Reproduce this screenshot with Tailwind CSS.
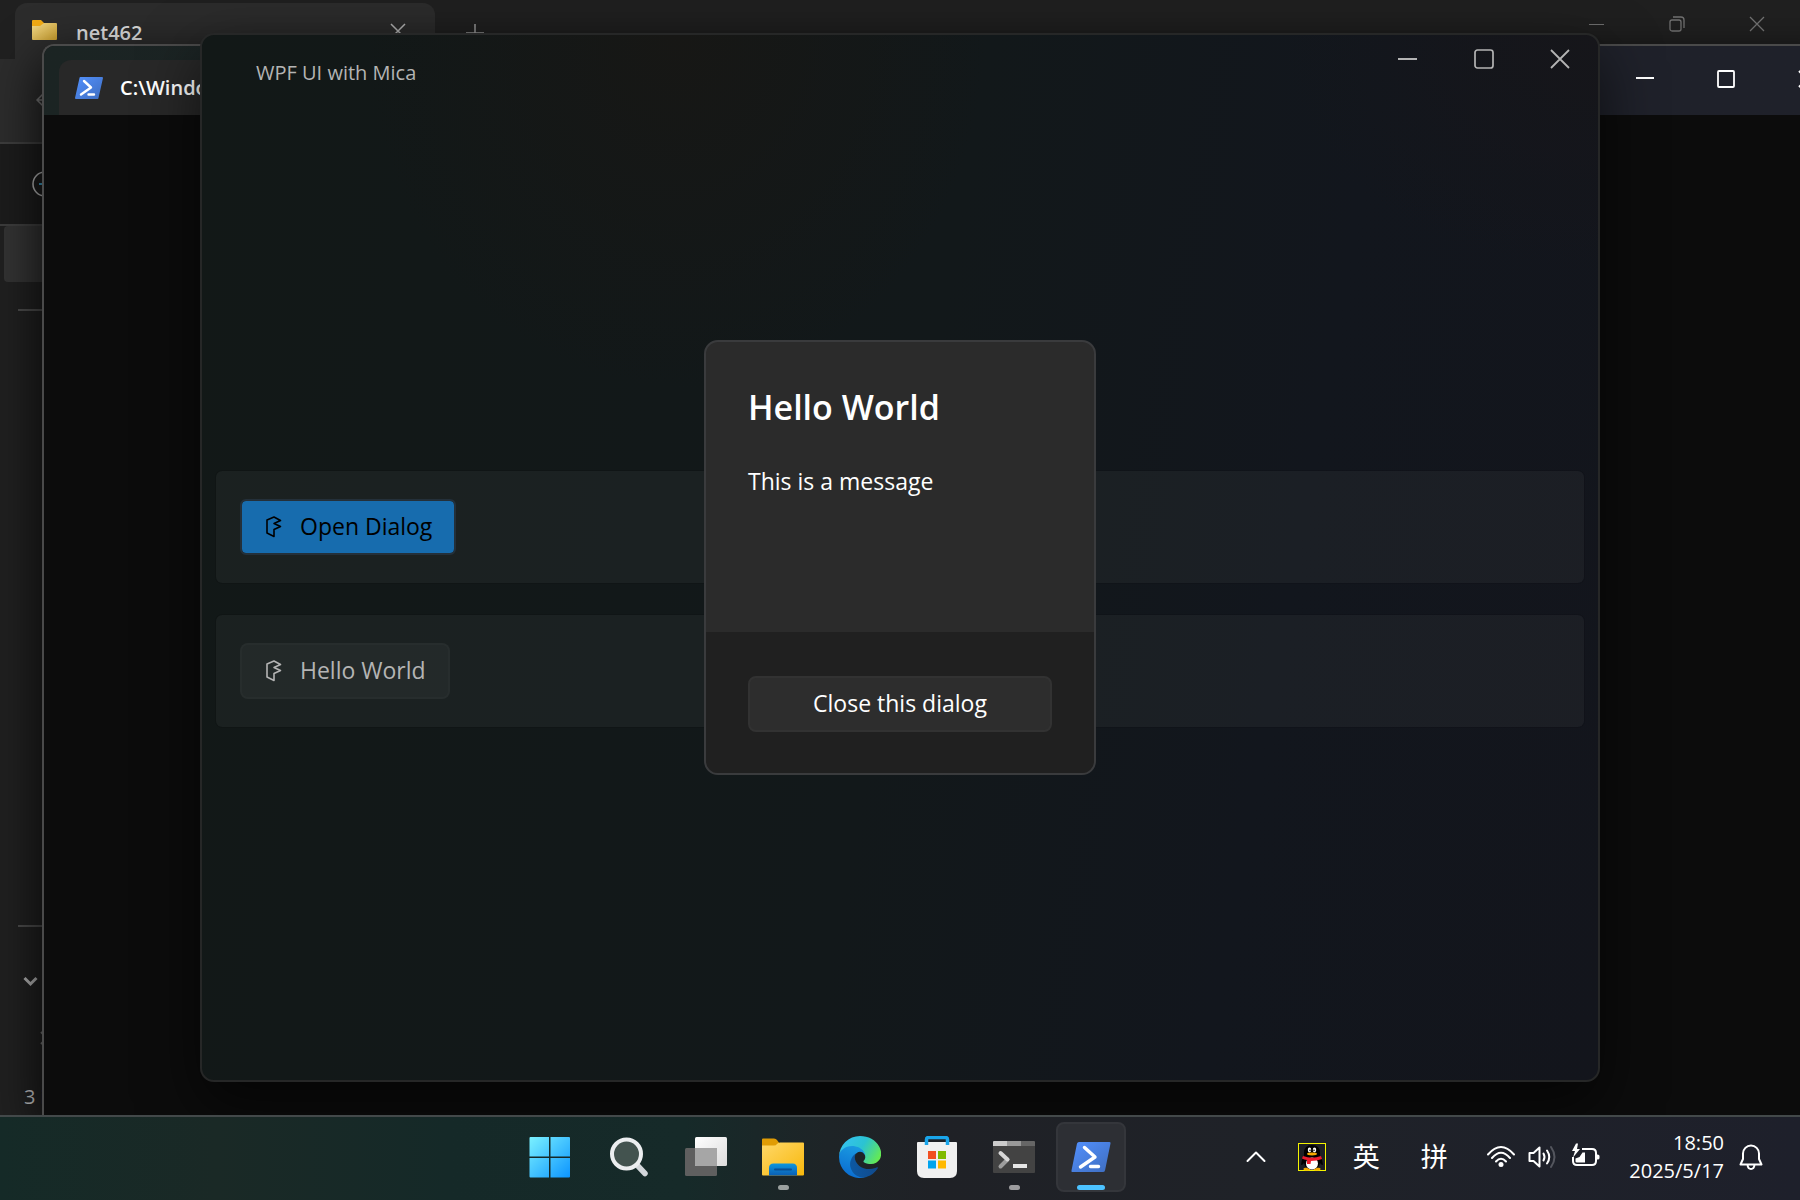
<!DOCTYPE html>
<html lang="zh-CN">
<head>
    <meta charset="UTF-8">
    <meta name="viewport" content="width=device-width, initial-scale=1.0">
    <title>WPF UI with Mica</title>
    <script src="https://cdn.jsdelivr.net/npm/@tailwindcss/browser@4"></script>
</head>
<body class="h-screen overflow-hidden bg-black font-['Open_Sans','Noto_Sans_CJK_SC',sans-serif] text-white">
    <div class="flex h-full flex-col">
        <main class="relative flex-1 overflow-hidden">

            <!-- File Explorer -->
            <section class="absolute inset-0 flex flex-col bg-[#202020]">
                <header class="flex h-[59px] bg-[#202020]">
                    <div class="ml-[15px] mt-[3px] flex w-[420px] items-start justify-between rounded-t-xl bg-[#2c2c2c] pl-[17px] pr-[29px] pt-[10px]">
                        <div class="flex gap-[18px]">
                            <svg class="mt-1 h-6 w-[26px]" viewBox="0 0 26 24">
                                <defs>
                                    <linearGradient id="smallFolder" x1="0" y1="0" x2="1" y2="1">
                                        <stop offset="0" stop-color="#f5dc8c"/>
                                        <stop offset="1" stop-color="#c99d2b"/>
                                    </linearGradient>
                                </defs>
                                <path d="M0 5V4q0-1 1-1h8l3 3v4H0z" fill="#f2ab14"/>
                                <path d="M0 9h8l4-3h12q1 0 1 1v15q0 1-1 1H1q-1 0-1-1z" fill="url(#smallFolder)"/>
                            </svg>
                            <span class="text-xl/10 font-semibold text-[#dedede]">net462</span>
                        </div>
                        <button class="pt-[10px]" aria-label="Close tab">
                            <svg class="h-4 w-4" viewBox="0 0 16 16" fill="none" stroke="#b8b8b8" stroke-width="1.5"><path d="M1 1l14 14M15 1L1 15"/></svg>
                        </button>
                    </div>
                    <button class="ml-[31px] self-start pt-[24px]" aria-label="New tab">
                        <svg class="h-[18px] w-[18px]" viewBox="0 0 18 18" fill="none" stroke="#9a9a9a" stroke-width="1.5"><path d="M9 0v18M0 9h18"/></svg>
                    </button>
                    <div class="ml-auto flex h-12 pr-[3px] text-[#747474]">
                        <button class="grid w-20 place-items-center" aria-label="Minimize">
                            <svg class="h-4 w-4" viewBox="0 0 16 16" fill="none" stroke="currentColor"><path d="M0 8.500h15"/></svg>
                        </button>
                        <button class="grid w-20 place-items-center" aria-label="Restore">
                            <svg class="h-4 w-4" viewBox="0 0 16 16" fill="none" stroke="currentColor" stroke-width="1.300"><rect x="1" y="4" width="11" height="11" rx="2"/><path d="M4 1h8q3 0 3 3v8"/></svg>
                        </button>
                        <button class="grid w-20 place-items-center" aria-label="Close">
                            <svg class="h-4 w-4" viewBox="0 0 16 16" fill="none" stroke="currentColor" stroke-width="1.300"><path d="M1 1l14 14M15 1L1 15"/></svg>
                        </button>
                    </div>
                </header>
                <div class="flex h-[85px] items-center border-b-2 border-[#3d3d3d] bg-[#2c2c2c] pl-9">
                    <svg class="h-5 w-5" viewBox="0 0 20 20" fill="none" stroke="#777" stroke-width="1.500"><path d="M9 1L1 9l8 8M1 9h18"/></svg>
                </div>
                <div class="flex h-[82px] items-center border-b-2 border-[#3d3d3d] bg-[#1c1c1c] pl-8">
                    <svg class="h-[26px] w-[26px]" viewBox="0 0 26 26" fill="none" stroke-width="1.500"><circle cx="13" cy="13" r="12" stroke="#b5b5b5"/><path d="M7 13h12" stroke="#3f9cc4" stroke-width="2"/></svg>
                </div>
                <nav class="flex w-60 flex-1 flex-col bg-[#202020]">
                    <div class="ml-1 h-14 rounded-sm bg-[#333333]"></div>
                    <hr class="ml-[18px] mt-[27px] border-t-2 border-[#4a4a4a]">
                    <hr class="ml-[18px] mt-auto border-t-2 border-[#4a4a4a]">
                    <svg class="ml-[23px] mt-[49px] h-3 w-[15px]" viewBox="0 0 15 12" fill="none" stroke="#b0b0b0" stroke-width="3"><path d="M1.500 2l6 6 6-6"/></svg>
                    <svg class="ml-10 mt-[43px] h-[14px] w-2" viewBox="0 0 8 14" fill="none" stroke="#777" stroke-width="2"><path d="M1 1l6 6-6 6"/></svg>
                    <p class="mb-2 ml-6 mt-[42px] text-xl/5 text-[#c0c0c0]">3 items</p>
                </nav>
            </section>

            <!-- Terminal -->
            <section class="absolute -right-12 bottom-0 left-[42px] top-11 flex flex-col overflow-hidden rounded-tl-xl border-l-2 border-t-2 border-[#4a4a4a] bg-[#0c0c0c] shadow-[0_16px_50px_rgba(0,0,0,0.85)]">
                <header class="flex h-[69px] bg-linear-to-r from-[#1b2423] to-[#1f212a] to-85%">
                    <div class="ml-[15px] mt-[14px] flex w-[400px] items-center gap-[17px] rounded-t-xl bg-[#282828] pl-4">
                        <svg class="h-[22px] w-7" viewBox="0 0 28 22">
                            <defs>
                                <linearGradient id="ps" x1="0" y1="0" x2="1" y2="1">
                                    <stop offset="0" stop-color="#5391fe"/>
                                    <stop offset="1" stop-color="#3e6dbf"/>
                                </linearGradient>
                            </defs>
                            <path d="M5.500 0H27q1 0 1 1l-4.500 20q0 1-1 1H1q-1 0-1-1L4.500 1q0-1 1-1z" fill="url(#ps)"/>
                            <path d="M9 4l7 6.500-10 7M13.500 17.500H19" fill="none" stroke="#fff" stroke-width="2.400" stroke-linecap="round" stroke-linejoin="round"/>
                        </svg>
                        <span class="text-xl font-semibold">C:\Windo</span>
                    </div>
                    <div class="ml-auto flex h-[66px]">
                        <button class="grid w-[81px] place-items-center" aria-label="Minimize">
                            <svg class="h-[18px] w-[18px]" viewBox="0 0 18 18" fill="none" stroke="#fff" stroke-width="2"><path d="M0 8h18"/></svg>
                        </button>
                        <button class="grid w-[81px] place-items-center" aria-label="Maximize">
                            <svg class="h-[18px] w-[18px]" viewBox="0 0 18 18" fill="none" stroke="#fff" stroke-width="1.800"><rect x="1" y="1" width="16" height="16" rx="1"/></svg>
                        </button>
                        <button class="grid w-[82px] place-items-center" aria-label="Close">
                            <svg class="h-[18px] w-[18px]" viewBox="0 0 18 18" fill="none" stroke="#fff" stroke-width="2"><path d="M1 1l16 16M17 1L1 17"/></svg>
                        </button>
                    </div>
                </header>
            </section>

            <!-- WPF UI window -->
            <section class="absolute inset-x-[200px] inset-y-[33px] flex flex-col rounded-[14px] border-2 border-[#262727] bg-[radial-gradient(ellipse_at_34%_0%,#171715_0%,transparent_24%),radial-gradient(ellipse_at_100%_0%,#16161a_0%,transparent_16%),linear-gradient(100deg,#121817_0%,#12181a_50%,#12161d_75%,#13151c_100%)] shadow-[0_24px_60px_rgba(0,0,0,0.6)]">
                <header class="flex h-[82px] items-start justify-between text-[#b4b4b4]">
                    <h1 class="pl-[54px] pt-[22px] text-xl/8">WPF UI with Mica</h1>
                    <div class="flex h-12">
                        <button class="grid w-[76px] place-items-center" aria-label="Minimize">
                            <svg class="h-5 w-5" viewBox="0 0 20 20" fill="none" stroke="currentColor" stroke-width="2"><path d="M0 10h19"/></svg>
                        </button>
                        <button class="grid w-[76px] place-items-center" aria-label="Maximize">
                            <svg class="h-5 w-5" viewBox="0 0 20 20" fill="none" stroke="currentColor" stroke-width="1.700"><rect x="1" y="1" width="18" height="18" rx="2.500"/></svg>
                        </button>
                        <button class="grid w-[76px] place-items-center" aria-label="Close">
                            <svg class="h-5 w-5" viewBox="0 0 20 20" fill="none" stroke="currentColor" stroke-width="1.800"><path d="M1 1l18 18M19 1L1 19"/></svg>
                        </button>
                    </div>
                </header>

                <div class="flex flex-1 flex-col justify-center gap-8 px-[14px]">
                    <div class="rounded-md bg-white/4 px-6 py-7 outline outline-black/10">
                        <button class="flex h-14 items-center gap-[18px] rounded-md border-2 border-[#24303a] bg-[#176cae] bg-clip-padding pl-6 pr-[22px] text-[23px] text-black">
                            <svg class="h-[22px] w-4" viewBox="0 0 16 22" fill="none" stroke="currentColor" stroke-width="1.600" stroke-linejoin="round"><path d="M8 20.500L1 17V4l7-3 6.500 3.500L8 7.500l6.500 3L8 13.500z"/></svg>
                            Open Dialog
                        </button>
                    </div>
                    <div class="rounded-md bg-white/4 px-6 py-7 outline outline-black/10">
                        <button class="flex h-14 items-center gap-[18px] rounded-lg border-2 border-white/2 bg-white/4 pl-6 pr-[22px] text-[23px] text-[#b4b4b4]">
                            <svg class="h-[22px] w-4" viewBox="0 0 16 22" fill="none" stroke="currentColor" stroke-width="1.600" stroke-linejoin="round"><path d="M8 20.500L1 17V4l7-3 6.500 3.500L8 7.500l6.500 3L8 13.500z"/></svg>
                            Hello World
                        </button>
                    </div>
                </div>

                <!-- Content dialog, centred over the whole window -->
                <div class="absolute inset-0 grid place-items-center">
                    <div role="dialog" aria-labelledby="dialogTitle" class="flex w-[392px] flex-col overflow-hidden rounded-[14px] border-2 border-[#3a3b3d] bg-[#2b2b2b]">
                        <div class="h-[290px] px-[42px] pt-[43px]">
                            <h2 id="dialogTitle" class="text-[34px]/[44px] font-semibold">Hello World</h2>
                            <p class="mt-9 text-[23px]/8">This is a message</p>
                        </div>
                        <div class="bg-[#202020] px-[42px] pb-[41px] pt-11">
                            <button class="h-14 w-full rounded-lg border-2 border-[#323232] bg-[#2d2d2d] pb-[2px] text-[23px]">Close this dialog</button>
                        </div>
                    </div>
                </div>
            </section>
        </main>

        <!-- Taskbar -->
        <footer class="grid h-[85px] grid-cols-[517fr_auto_674fr] items-center border-t-2 border-[#43494a] bg-[linear-gradient(90deg,#152a27_0%,#1a2926_12%,#152928_25%,#162a29_38%,#1e2427_46%,#1f2126_52%,#1f2228_70%,#1e202b_100%)] pb-[3px]">
            <div></div>
            <div class="flex gap-[7px]">
                <button class="grid h-[70px] w-[70px] place-items-center pr-1" aria-label="Start">
                    <svg class="h-[42px] w-[42px]" viewBox="0 0 42 42">
                        <defs>
                            <linearGradient id="win" gradientUnits="userSpaceOnUse" x1="0" y1="0" x2="42" y2="42">
                                <stop offset="0" stop-color="#7df3ff"/>
                                <stop offset="1" stop-color="#0a93ff"/>
                            </linearGradient>
                        </defs>
                        <path d="M1.500 1H20v19.500H.5V2q0-1 1-1zM21.500 1H40q1 0 1 1v18.500H21.500zM.5 22H20v19.500H1.500q-1 0-1-1zM21.500 22H41v18.500q0 1-1 1H21.500z" fill="url(#win)"/>
                    </svg>
                </button>
                <button class="grid h-[70px] w-[70px] place-items-center" aria-label="Search">
                    <svg class="h-10 w-10" viewBox="0 0 40 40">
                        <path d="M28 28l8 8.500" stroke="#d3d7db" stroke-width="5.500" stroke-linecap="round"/>
                        <circle cx="17.500" cy="17" r="14.500" fill="#43534f" stroke="#eceef0" stroke-width="4"/>
                    </svg>
                </button>
                <button class="grid h-[70px] w-[70px] place-items-center" aria-label="Task view">
                    <svg class="h-10 w-[42px]" viewBox="0 0 42 40">
                        <defs>
                            <linearGradient id="view" x1="0" y1="0" x2="1" y2="1">
                                <stop offset="0" stop-color="#ffffff"/>
                                <stop offset="1" stop-color="#dcdcdc"/>
                            </linearGradient>
                        </defs>
                        <rect x="0" y="11" width="32" height="28" rx="1.500" fill="#5f5f5f"/>
                        <rect x="10" y="0" width="32" height="29" rx="1.500" fill="url(#view)"/>
                        <path d="M10 11h22v18H11.500q-1.500 0-1.500-1.500z" fill="#a6a6a6"/>
                    </svg>
                </button>
                <button class="relative grid h-[70px] w-[70px] place-items-center" aria-label="File Explorer">
                    <svg class="h-[38px] w-[42px]" viewBox="0 0 42 38">
                        <defs>
                            <linearGradient id="folder" x1="0" y1="0" x2="1" y2="1">
                                <stop offset="0" stop-color="#ffd869"/>
                                <stop offset="1" stop-color="#f8b80c"/>
                            </linearGradient>
                            <linearGradient id="tray" x1="0" y1="0" x2="0" y2="1">
                                <stop offset="0" stop-color="#0f96dd"/>
                                <stop offset="1" stop-color="#0a5fb4"/>
                            </linearGradient>
                        </defs>
                        <path d="M0 8V1.500Q0 .5 1 .5h11q2 0 3 1.500l3 4-5 4H0z" fill="#e09c05"/>
                        <path d="M0 7.500h12q2 0 3-1.500t3-1.500h23q1 0 1 1V36.500q0 1-1 1H1q-1 0-1-1z" fill="url(#folder)"/>
                        <path d="M7 37.500V30q0-4.500 4.500-4.500h19Q35 25.500 35 30v7.500z" fill="url(#tray)"/>
                        <path d="M13 31.500h16" stroke="#0a4f94" stroke-width="2" stroke-linecap="round"/>
                    </svg>
                    <span class="absolute bottom-[2px] left-[30px] h-[5px] w-[11px] rounded-full bg-[#9aa09f]"></span>
                </button>
                <button class="grid h-[70px] w-[70px] place-items-center" aria-label="Microsoft Edge">
                    <svg class="h-[42px] w-[42px]" viewBox="0 0 256 256">
                        <defs>
                            <linearGradient id="edgeA" x1="0" y1=".6" x2="1" y2=".6"><stop offset="0" stop-color="#0c59a4"/><stop offset="1" stop-color="#114a8b"/></linearGradient>
                            <linearGradient id="edgeB" x1=".6" y1="0" x2=".3" y2="1"><stop offset="0" stop-color="#1b9de2"/><stop offset="1" stop-color="#0a6bd0"/></linearGradient>
                            <linearGradient id="edgeC" x1="0" y1=".3" x2="1" y2=".7"><stop offset="0" stop-color="#35c1f1"/><stop offset=".5" stop-color="#2bc3d2"/><stop offset="1" stop-color="#66eb4f"/></linearGradient>
                        </defs>
                        <path d="M231 190.500a93.700 93.700 0 0 1-10.500 4.700 101.900 101.900 0 0 1-35.900 6.500c-47.300 0-88.500-32.500-88.500-74.300a31.500 31.500 0 0 1 16.400-27.300c-42.800 1.800-53.800 46.400-53.800 72.500 0 74 68.100 81.400 82.800 81.400 7.900 0 19.800-2.300 27-4.600l1.300-.4a128.300 128.300 0 0 0 66.600-52.800 4 4 0 0 0-5.400-5.700z" fill="url(#edgeA)"/>
                        <path d="M105.700 241.400a79.200 79.200 0 0 1-22.700-21.300 80.700 80.700 0 0 1 29.500-120c3.200-1.500 8.500-4.100 15.600-4a32.400 32.400 0 0 1 25.700 13 31.900 31.900 0 0 1 6.300 18.700c0-.2 24.500-79.600-80-79.600-43.900 0-80 41.600-80 78.200a130.200 130.200 0 0 0 12.100 56 128 128 0 0 0 156.400 67 75.500 75.500 0 0 1-62.800-8z" fill="url(#edgeB)"/>
                        <path d="M152.300 148.900c-.8 1-3.300 2.500-3.300 5.700 0 2.600 1.700 5.200 4.800 7.300 14.500 10.200 42 8.800 42 8.800a60.200 60.200 0 0 0 30.600-8.400 61.800 61.800 0 0 0 30.400-53.300c.3-22.300-8-37.200-11.300-43.800C224.300 23.500 178.600 0 128 0A128 128 0 0 0 0 126.200c.5-36.500 36.800-66 80-66 3.500 0 23.500.3 42 10a72.600 72.600 0 0 1 30.900 29.300c6.200 10.600 7.200 24.100 7.200 29.500 0 5.300-2.700 13.300-7.800 19.900z" fill="url(#edgeC)"/>
                    </svg>
                </button>
                <button class="grid h-[70px] w-[70px] place-items-center" aria-label="Microsoft Store">
                    <svg class="h-[42px] w-10" viewBox="0 0 40 42">
                        <path d="M0 7q0-1 1-1h38q1 0 1 1v28q0 7-7 7H7q-7 0-7-7z" fill="#f0f0f0"/>
                        <path d="M9.500 9V3.500q0-2 2-2h17q2 0 2 2V9" fill="none" stroke="#19a5ea" stroke-width="3.500"/>
                        <path d="M11 15h8v8h-8z" fill="#f25022"/>
                        <path d="M21 15h8v8h-8z" fill="#7fba00"/>
                        <path d="M11 24.500h8v8h-8z" fill="#00a4ef"/>
                        <path d="M21 24.500h8v8h-8z" fill="#ffb900"/>
                    </svg>
                </button>
                <button class="relative grid h-[70px] w-[70px] place-items-center" aria-label="Terminal">
                    <svg class="h-8 w-[42px]" viewBox="0 0 42 32">
                        <path d="M0 5h42v26q0 1-1 1H1q-1 0-1-1z" fill="#434343"/>
                        <path d="M1 0h13v5H0V1q0-1 1-1z" fill="#cccccc"/>
                        <path d="M14 0h14v5H14z" fill="#999999"/>
                        <path d="M28 0h13q1 0 1 1v4H28z" fill="#666666"/>
                        <path d="M14.500 18.500L7.500 25.500" stroke="#9d9d9d" stroke-width="4" stroke-linecap="round"/>
                        <path d="M7.500 12l7 6.500" stroke="#d8d8d8" stroke-width="4" stroke-linecap="round"/>
                        <path d="M20 23h14v4H20z" fill="#e6e6e6"/>
                    </svg>
                    <span class="absolute bottom-[2px] left-[30px] h-[5px] w-[11px] rounded-full bg-[#9c9c9e]"></span>
                </button>
                <button class="relative grid h-[70px] w-[70px] place-items-center rounded-lg border-2 border-[#34363b] bg-[#2d2f34]" aria-label="PowerShell">
                    <svg class="h-[30px] w-10" viewBox="0 0 40 30">
                        <path d="M8 0h30.500q1.500 0 1 1.500L34 28.500q-.5 1.500-2 1.500H1.500Q0 30 .5 28.500L6 1.500Q6.500 0 8 0z" fill="url(#ps)"/>
                        <path d="M13.500 5.500L24 15 9.500 25M19.500 24.500h8" fill="none" stroke="#fff" stroke-width="3.400" stroke-linecap="round" stroke-linejoin="round"/>
                    </svg>
                    <span class="absolute bottom-0 left-[19px] h-[5px] w-7 rounded-full bg-[#4cc2ff]"></span>
                </button>
            </div>

            <div class="flex items-center justify-end pr-[37px]">
                <button aria-label="Show hidden icons">
                    <svg class="h-5 w-5" viewBox="0 0 20 20" fill="none" stroke="#fff" stroke-width="2" stroke-linecap="round" stroke-linejoin="round"><path d="M1.500 14L10 5.500 18.500 14"/></svg>
                </button>
                <button class="ml-8" aria-label="QQ">
                    <svg class="h-7 w-7" viewBox="0 0 28 28">
                        <rect x=".5" y=".5" width="27" height="27" fill="#1d1f24" stroke="#f4f400"/>
                        <ellipse cx="9" cy="26" rx="3.500" ry="1.500" fill="#f5a800"/>
                        <ellipse cx="19" cy="26" rx="3.500" ry="1.500" fill="#f5a800"/>
                        <path d="M14 2q8 0 8 8v3q3 4 3 9-2 0-3-2-1 6-8 6t-8-6q-1 2-3 2 0-5 3-9v-3q0-8 8-8z" fill="#000"/>
                        <ellipse cx="14" cy="20.500" rx="6" ry="6" fill="#fff"/>
                        <ellipse cx="11.500" cy="7" rx="1.700" ry="2.400" fill="#fff"/>
                        <ellipse cx="16.500" cy="7" rx="1.700" ry="2.400" fill="#fff"/>
                        <circle cx="12" cy="7.300" r=".8"/>
                        <circle cx="16" cy="7.300" r=".8"/>
                        <ellipse cx="14" cy="11" rx="5" ry="1.400" fill="#f5a800"/>
                        <path d="M5 13q9 3.500 18 0l1 3q-5 2-11 2l-.5 3H9v-4q-3-.5-5-1.500z" fill="#ec1c2e"/>
                    </svg>
                </button>
                <button class="ml-[26px] w-7 text-[27px]/9">英</button>
                <button class="ml-10 w-7 text-[27px]/9">拼</button>
                <button class="ml-[39px]" aria-label="Network">
                    <svg class="h-7 w-7" viewBox="0 0 28 28" fill="none" stroke="#fff" stroke-width="2" stroke-linecap="round"><path d="M1 11.500Q14-3.500 27 11.500M5 15Q14 4.500 23 15M9 18.500q5-5.500 10 0"/><circle cx="14" cy="21.500" r="2.500" fill="#fff" stroke="none"/></svg>
                </button>
                <button class="ml-[13px]" aria-label="Volume">
                    <svg class="h-7 w-[30px]" viewBox="0 0 30 28" fill="none" stroke="#fff" stroke-width="2" stroke-linecap="round" stroke-linejoin="round"><path d="M1.500 10h4l6-5.500v19L5.500 18h-4zM15.500 10.500q2 3.500 0 7M19 7.500q4.500 6.500 0 13"/><path d="M23 4q7 10 0 20" stroke="#54565e"/></svg>
                </button>
                <button class="ml-[13px]" aria-label="Battery">
                    <svg class="h-7 w-[29px]" viewBox="0 0 29 28" fill="none" stroke="#fff" stroke-width="2"><path d="M11 6h10q4 0 4 4v8q0 4-4 4H6q-4 0-4-4v-4"/><path d="M25.500 11.500h1q2 0 2 1.500v2q0 1.500-2 1.500h-1z" fill="#fff" stroke="none"/><path d="M4.500 18.500V15.500l4-1.500 3-4.500h2.500v10H6q-1.500 0-1.500-1z" fill="#fff" stroke="none"/><path d="M5 .5L1 8h3l-2 6.500L9 6H6L7 .5z" fill="#fff" stroke="none"/></svg>
                </button>
                <button class="ml-[29px] text-right text-xl/7">
                    <span class="block">18:50</span>
                    <span class="block">2025/5/17</span>
                </button>
                <button class="ml-[15px]" aria-label="Notifications">
                    <svg class="h-7 w-6" viewBox="0 0 24 28" fill="none" stroke="#fff" stroke-width="2" stroke-linejoin="round"><path d="M1.500 21.500L4 16V10.500a8 8 0 0 1 16 0V16l2.500 5.500zM8.500 22q.5 4 3.500 4t3.500-4"/></svg>
                </button>
            </div>
        </footer>
    </div>
</body>
</html>
